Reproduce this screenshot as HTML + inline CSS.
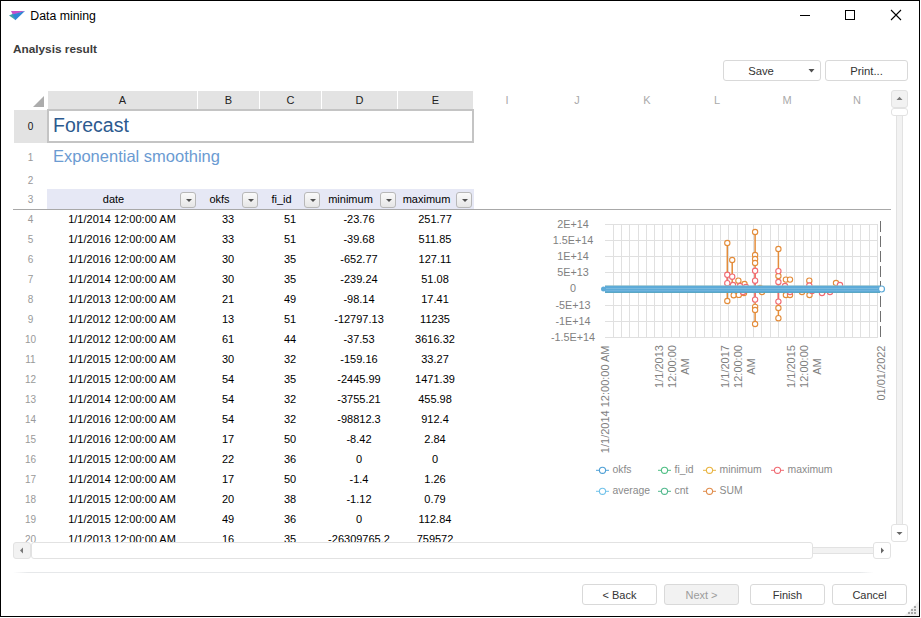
<!DOCTYPE html><html><head><meta charset="utf-8"><style>
html,body{margin:0;padding:0;background:#fff;}
body{width:921px;height:618px;position:relative;overflow:hidden;font-family:"Liberation Sans", sans-serif;}
.t,.b{position:absolute;box-sizing:border-box;white-space:nowrap;}
.btn{position:absolute;box-sizing:border-box;border:1px solid #d9d9d9;border-radius:3px;background:#fff;font-size:11px;color:#333;text-align:center;}
.fb{position:absolute;box-sizing:border-box;width:16px;height:16px;border:1px solid #b8b8b8;border-radius:3px;background:linear-gradient(#fafafa,#e6e6e6);}
.fb:after{content:"";position:absolute;left:4.5px;top:6px;border-left:3px solid transparent;border-right:3px solid transparent;border-top:3px solid #505050;}
</style></head><body>
<div class="b" style="left:0px;top:0px;width:920px;height:617px;border:1px solid #000;"></div>
<svg class="b" style="left:0;top:0" width="40" height="30" viewBox="0 0 40 30"><polygon points="11,11 25,11 13,15" fill="#c552c9"/><polygon points="9,15.5 13,13.8 15.5,20" fill="#3fa3a8"/><polygon points="12.5,14.5 25,11 15.3,20.3" fill="#2f86d4"/></svg>
<div class="t" style="left:30.3px;top:8px;width:100px;height:16px;line-height:16px;font-size:12.3px;color:#000;text-align:left;font-weight:normal;">Data mining</div>
<svg class="b" style="left:790px;top:0" width="120" height="30" viewBox="790 0 120 30"><rect x="800" y="15" width="10" height="1" fill="#000"/><rect x="845.5" y="10.5" width="9" height="9" fill="none" stroke="#000" stroke-width="1"/><path d="M891,10 L901,20 M901,10 L891,20" stroke="#000" stroke-width="1.1"/></svg>
<div class="t" style="left:13px;top:41px;width:120px;height:16px;line-height:16px;font-size:11.8px;color:#3c3c3c;text-align:left;font-weight:bold;">Analysis result</div>
<div class="btn" style="left:723px;top:60px;width:98px;height:21px;"></div>
<div class="t" style="left:723px;top:61px;width:76px;height:21px;line-height:21px;font-size:11.3px;color:#333;text-align:center;font-weight:normal;">Save</div>
<svg class="b" style="left:808px;top:68px" width="8" height="6"><polygon points="0.5,1 6.5,1 3.5,4.5" fill="#505050"/></svg>
<div class="btn" style="left:825px;top:60px;width:83px;height:21px;"></div>
<div class="t" style="left:825px;top:61px;width:83px;height:21px;line-height:21px;font-size:11.3px;color:#333;text-align:center;font-weight:normal;">Print...</div>
<svg class="b" style="left:30px;top:94px" width="16" height="16"><polygon points="3,13 14,13 14,2" fill="#acacac"/></svg>
<div class="b" style="left:48px;top:91px;width:425px;height:18px;background:#e3e3e3;"></div>
<div class="b" style="left:197px;top:91px;width:1px;height:18px;background:#fff;"></div>
<div class="b" style="left:259px;top:91px;width:1px;height:18px;background:#fff;"></div>
<div class="b" style="left:321px;top:91px;width:1px;height:18px;background:#fff;"></div>
<div class="b" style="left:397px;top:91px;width:1px;height:18px;background:#fff;"></div>
<div class="t" style="left:48px;top:91px;width:149px;height:18px;line-height:18px;font-size:11px;color:#222;text-align:center;font-weight:normal;">A</div>
<div class="t" style="left:198px;top:91px;width:61px;height:18px;line-height:18px;font-size:11px;color:#222;text-align:center;font-weight:normal;">B</div>
<div class="t" style="left:260px;top:91px;width:61px;height:18px;line-height:18px;font-size:11px;color:#222;text-align:center;font-weight:normal;">C</div>
<div class="t" style="left:322px;top:91px;width:75px;height:18px;line-height:18px;font-size:11px;color:#222;text-align:center;font-weight:normal;">D</div>
<div class="t" style="left:398px;top:91px;width:75px;height:18px;line-height:18px;font-size:11px;color:#222;text-align:center;font-weight:normal;">E</div>
<div class="t" style="left:472px;top:91px;width:70px;height:18px;line-height:18px;font-size:11px;color:#aaa;text-align:center;font-weight:normal;">I</div>
<div class="t" style="left:542px;top:91px;width:70px;height:18px;line-height:18px;font-size:11px;color:#aaa;text-align:center;font-weight:normal;">J</div>
<div class="t" style="left:612px;top:91px;width:70px;height:18px;line-height:18px;font-size:11px;color:#aaa;text-align:center;font-weight:normal;">K</div>
<div class="t" style="left:682px;top:91px;width:70px;height:18px;line-height:18px;font-size:11px;color:#aaa;text-align:center;font-weight:normal;">L</div>
<div class="t" style="left:752px;top:91px;width:70px;height:18px;line-height:18px;font-size:11px;color:#aaa;text-align:center;font-weight:normal;">M</div>
<div class="t" style="left:822px;top:91px;width:70px;height:18px;line-height:18px;font-size:11px;color:#aaa;text-align:center;font-weight:normal;">N</div>
<div class="b" style="left:14px;top:110px;width:33px;height:33px;background:#e3e3e3;"></div>
<div class="t" style="left:14px;top:110px;width:33px;height:33px;line-height:33px;font-size:10px;color:#111;text-align:center;font-weight:normal;">0</div>
<div class="t" style="left:14px;top:144px;width:33px;height:28px;line-height:28px;font-size:10px;color:#999;text-align:center;font-weight:normal;">1</div>
<div class="t" style="left:14px;top:171.5px;width:33px;height:18px;line-height:18px;font-size:10px;color:#999;text-align:center;font-weight:normal;">2</div>
<div class="t" style="left:14px;top:190px;width:33px;height:20px;line-height:20px;font-size:10px;color:#999;text-align:center;font-weight:normal;">3</div>
<div class="b" style="left:47px;top:109px;width:427px;height:34px;border:2px solid #c4c4c4;"></div>
<div class="t" style="left:53px;top:110px;width:300px;height:30px;line-height:30px;font-size:19.5px;color:#2c5a8f;text-align:left;font-weight:normal;">Forecast</div>
<div class="t" style="left:53px;top:143px;width:300px;height:26px;line-height:26px;font-size:16.5px;color:#6b9bd2;text-align:left;font-weight:normal;">Exponential smoothing</div>
<div class="b" style="left:47px;top:189px;width:427px;height:20px;background:#e6e8f5;"></div>
<div class="t" style="left:47px;top:189px;width:133px;height:20px;line-height:20px;font-size:11px;color:#000;text-align:center;font-weight:normal;">date</div>
<div class="fb" style="left:180px;top:192px;"></div>
<div class="t" style="left:197px;top:189px;width:45px;height:20px;line-height:20px;font-size:11px;color:#000;text-align:center;font-weight:normal;">okfs</div>
<div class="fb" style="left:242px;top:192px;"></div>
<div class="t" style="left:259px;top:189px;width:45px;height:20px;line-height:20px;font-size:11px;color:#000;text-align:center;font-weight:normal;">fi_id</div>
<div class="fb" style="left:304px;top:192px;"></div>
<div class="t" style="left:321px;top:189px;width:59px;height:20px;line-height:20px;font-size:11px;color:#000;text-align:center;font-weight:normal;">minimum</div>
<div class="fb" style="left:380px;top:192px;"></div>
<div class="t" style="left:397px;top:189px;width:59px;height:20px;line-height:20px;font-size:11px;color:#000;text-align:center;font-weight:normal;">maximum</div>
<div class="fb" style="left:456px;top:192px;"></div>
<div class="b" style="left:13px;top:209px;width:878px;height:1px;background:#a8a8a8;"></div>
<div class="b" style="left:0;top:210px;width:900px;height:332px;overflow:hidden;">
<div class="t" style="left:14px;top:0px;width:33px;height:20px;line-height:20px;font-size:10px;color:#999;text-align:center;font-weight:normal;">4</div>
<div class="t" style="left:47px;top:-1px;width:150px;height:20px;line-height:20px;font-size:11px;color:#000;text-align:center;font-weight:normal;">1/1/2014 12:00:00 AM</div>
<div class="t" style="left:197px;top:-1px;width:62px;height:20px;line-height:20px;font-size:11px;color:#000;text-align:center;font-weight:normal;">33</div>
<div class="t" style="left:259px;top:-1px;width:62px;height:20px;line-height:20px;font-size:11px;color:#000;text-align:center;font-weight:normal;">51</div>
<div class="t" style="left:321px;top:-1px;width:76px;height:20px;line-height:20px;font-size:11px;color:#000;text-align:center;font-weight:normal;">-23.76</div>
<div class="t" style="left:397px;top:-1px;width:76px;height:20px;line-height:20px;font-size:11px;color:#000;text-align:center;font-weight:normal;">251.77</div>
<div class="t" style="left:14px;top:20px;width:33px;height:20px;line-height:20px;font-size:10px;color:#999;text-align:center;font-weight:normal;">5</div>
<div class="t" style="left:47px;top:19px;width:150px;height:20px;line-height:20px;font-size:11px;color:#000;text-align:center;font-weight:normal;">1/1/2016 12:00:00 AM</div>
<div class="t" style="left:197px;top:19px;width:62px;height:20px;line-height:20px;font-size:11px;color:#000;text-align:center;font-weight:normal;">33</div>
<div class="t" style="left:259px;top:19px;width:62px;height:20px;line-height:20px;font-size:11px;color:#000;text-align:center;font-weight:normal;">51</div>
<div class="t" style="left:321px;top:19px;width:76px;height:20px;line-height:20px;font-size:11px;color:#000;text-align:center;font-weight:normal;">-39.68</div>
<div class="t" style="left:397px;top:19px;width:76px;height:20px;line-height:20px;font-size:11px;color:#000;text-align:center;font-weight:normal;">511.85</div>
<div class="t" style="left:14px;top:40px;width:33px;height:20px;line-height:20px;font-size:10px;color:#999;text-align:center;font-weight:normal;">6</div>
<div class="t" style="left:47px;top:39px;width:150px;height:20px;line-height:20px;font-size:11px;color:#000;text-align:center;font-weight:normal;">1/1/2016 12:00:00 AM</div>
<div class="t" style="left:197px;top:39px;width:62px;height:20px;line-height:20px;font-size:11px;color:#000;text-align:center;font-weight:normal;">30</div>
<div class="t" style="left:259px;top:39px;width:62px;height:20px;line-height:20px;font-size:11px;color:#000;text-align:center;font-weight:normal;">35</div>
<div class="t" style="left:321px;top:39px;width:76px;height:20px;line-height:20px;font-size:11px;color:#000;text-align:center;font-weight:normal;">-652.77</div>
<div class="t" style="left:397px;top:39px;width:76px;height:20px;line-height:20px;font-size:11px;color:#000;text-align:center;font-weight:normal;">127.11</div>
<div class="t" style="left:14px;top:60px;width:33px;height:20px;line-height:20px;font-size:10px;color:#999;text-align:center;font-weight:normal;">7</div>
<div class="t" style="left:47px;top:59px;width:150px;height:20px;line-height:20px;font-size:11px;color:#000;text-align:center;font-weight:normal;">1/1/2014 12:00:00 AM</div>
<div class="t" style="left:197px;top:59px;width:62px;height:20px;line-height:20px;font-size:11px;color:#000;text-align:center;font-weight:normal;">30</div>
<div class="t" style="left:259px;top:59px;width:62px;height:20px;line-height:20px;font-size:11px;color:#000;text-align:center;font-weight:normal;">35</div>
<div class="t" style="left:321px;top:59px;width:76px;height:20px;line-height:20px;font-size:11px;color:#000;text-align:center;font-weight:normal;">-239.24</div>
<div class="t" style="left:397px;top:59px;width:76px;height:20px;line-height:20px;font-size:11px;color:#000;text-align:center;font-weight:normal;">51.08</div>
<div class="t" style="left:14px;top:80px;width:33px;height:20px;line-height:20px;font-size:10px;color:#999;text-align:center;font-weight:normal;">8</div>
<div class="t" style="left:47px;top:79px;width:150px;height:20px;line-height:20px;font-size:11px;color:#000;text-align:center;font-weight:normal;">1/1/2013 12:00:00 AM</div>
<div class="t" style="left:197px;top:79px;width:62px;height:20px;line-height:20px;font-size:11px;color:#000;text-align:center;font-weight:normal;">21</div>
<div class="t" style="left:259px;top:79px;width:62px;height:20px;line-height:20px;font-size:11px;color:#000;text-align:center;font-weight:normal;">49</div>
<div class="t" style="left:321px;top:79px;width:76px;height:20px;line-height:20px;font-size:11px;color:#000;text-align:center;font-weight:normal;">-98.14</div>
<div class="t" style="left:397px;top:79px;width:76px;height:20px;line-height:20px;font-size:11px;color:#000;text-align:center;font-weight:normal;">17.41</div>
<div class="t" style="left:14px;top:100px;width:33px;height:20px;line-height:20px;font-size:10px;color:#999;text-align:center;font-weight:normal;">9</div>
<div class="t" style="left:47px;top:99px;width:150px;height:20px;line-height:20px;font-size:11px;color:#000;text-align:center;font-weight:normal;">1/1/2012 12:00:00 AM</div>
<div class="t" style="left:197px;top:99px;width:62px;height:20px;line-height:20px;font-size:11px;color:#000;text-align:center;font-weight:normal;">13</div>
<div class="t" style="left:259px;top:99px;width:62px;height:20px;line-height:20px;font-size:11px;color:#000;text-align:center;font-weight:normal;">51</div>
<div class="t" style="left:321px;top:99px;width:76px;height:20px;line-height:20px;font-size:11px;color:#000;text-align:center;font-weight:normal;">-12797.13</div>
<div class="t" style="left:397px;top:99px;width:76px;height:20px;line-height:20px;font-size:11px;color:#000;text-align:center;font-weight:normal;">11235</div>
<div class="t" style="left:14px;top:120px;width:33px;height:20px;line-height:20px;font-size:10px;color:#999;text-align:center;font-weight:normal;">10</div>
<div class="t" style="left:47px;top:119px;width:150px;height:20px;line-height:20px;font-size:11px;color:#000;text-align:center;font-weight:normal;">1/1/2012 12:00:00 AM</div>
<div class="t" style="left:197px;top:119px;width:62px;height:20px;line-height:20px;font-size:11px;color:#000;text-align:center;font-weight:normal;">61</div>
<div class="t" style="left:259px;top:119px;width:62px;height:20px;line-height:20px;font-size:11px;color:#000;text-align:center;font-weight:normal;">44</div>
<div class="t" style="left:321px;top:119px;width:76px;height:20px;line-height:20px;font-size:11px;color:#000;text-align:center;font-weight:normal;">-37.53</div>
<div class="t" style="left:397px;top:119px;width:76px;height:20px;line-height:20px;font-size:11px;color:#000;text-align:center;font-weight:normal;">3616.32</div>
<div class="t" style="left:14px;top:140px;width:33px;height:20px;line-height:20px;font-size:10px;color:#999;text-align:center;font-weight:normal;">11</div>
<div class="t" style="left:47px;top:139px;width:150px;height:20px;line-height:20px;font-size:11px;color:#000;text-align:center;font-weight:normal;">1/1/2015 12:00:00 AM</div>
<div class="t" style="left:197px;top:139px;width:62px;height:20px;line-height:20px;font-size:11px;color:#000;text-align:center;font-weight:normal;">30</div>
<div class="t" style="left:259px;top:139px;width:62px;height:20px;line-height:20px;font-size:11px;color:#000;text-align:center;font-weight:normal;">32</div>
<div class="t" style="left:321px;top:139px;width:76px;height:20px;line-height:20px;font-size:11px;color:#000;text-align:center;font-weight:normal;">-159.16</div>
<div class="t" style="left:397px;top:139px;width:76px;height:20px;line-height:20px;font-size:11px;color:#000;text-align:center;font-weight:normal;">33.27</div>
<div class="t" style="left:14px;top:160px;width:33px;height:20px;line-height:20px;font-size:10px;color:#999;text-align:center;font-weight:normal;">12</div>
<div class="t" style="left:47px;top:159px;width:150px;height:20px;line-height:20px;font-size:11px;color:#000;text-align:center;font-weight:normal;">1/1/2015 12:00:00 AM</div>
<div class="t" style="left:197px;top:159px;width:62px;height:20px;line-height:20px;font-size:11px;color:#000;text-align:center;font-weight:normal;">54</div>
<div class="t" style="left:259px;top:159px;width:62px;height:20px;line-height:20px;font-size:11px;color:#000;text-align:center;font-weight:normal;">35</div>
<div class="t" style="left:321px;top:159px;width:76px;height:20px;line-height:20px;font-size:11px;color:#000;text-align:center;font-weight:normal;">-2445.99</div>
<div class="t" style="left:397px;top:159px;width:76px;height:20px;line-height:20px;font-size:11px;color:#000;text-align:center;font-weight:normal;">1471.39</div>
<div class="t" style="left:14px;top:180px;width:33px;height:20px;line-height:20px;font-size:10px;color:#999;text-align:center;font-weight:normal;">13</div>
<div class="t" style="left:47px;top:179px;width:150px;height:20px;line-height:20px;font-size:11px;color:#000;text-align:center;font-weight:normal;">1/1/2014 12:00:00 AM</div>
<div class="t" style="left:197px;top:179px;width:62px;height:20px;line-height:20px;font-size:11px;color:#000;text-align:center;font-weight:normal;">54</div>
<div class="t" style="left:259px;top:179px;width:62px;height:20px;line-height:20px;font-size:11px;color:#000;text-align:center;font-weight:normal;">32</div>
<div class="t" style="left:321px;top:179px;width:76px;height:20px;line-height:20px;font-size:11px;color:#000;text-align:center;font-weight:normal;">-3755.21</div>
<div class="t" style="left:397px;top:179px;width:76px;height:20px;line-height:20px;font-size:11px;color:#000;text-align:center;font-weight:normal;">455.98</div>
<div class="t" style="left:14px;top:200px;width:33px;height:20px;line-height:20px;font-size:10px;color:#999;text-align:center;font-weight:normal;">14</div>
<div class="t" style="left:47px;top:199px;width:150px;height:20px;line-height:20px;font-size:11px;color:#000;text-align:center;font-weight:normal;">1/1/2016 12:00:00 AM</div>
<div class="t" style="left:197px;top:199px;width:62px;height:20px;line-height:20px;font-size:11px;color:#000;text-align:center;font-weight:normal;">54</div>
<div class="t" style="left:259px;top:199px;width:62px;height:20px;line-height:20px;font-size:11px;color:#000;text-align:center;font-weight:normal;">32</div>
<div class="t" style="left:321px;top:199px;width:76px;height:20px;line-height:20px;font-size:11px;color:#000;text-align:center;font-weight:normal;">-98812.3</div>
<div class="t" style="left:397px;top:199px;width:76px;height:20px;line-height:20px;font-size:11px;color:#000;text-align:center;font-weight:normal;">912.4</div>
<div class="t" style="left:14px;top:220px;width:33px;height:20px;line-height:20px;font-size:10px;color:#999;text-align:center;font-weight:normal;">15</div>
<div class="t" style="left:47px;top:219px;width:150px;height:20px;line-height:20px;font-size:11px;color:#000;text-align:center;font-weight:normal;">1/1/2016 12:00:00 AM</div>
<div class="t" style="left:197px;top:219px;width:62px;height:20px;line-height:20px;font-size:11px;color:#000;text-align:center;font-weight:normal;">17</div>
<div class="t" style="left:259px;top:219px;width:62px;height:20px;line-height:20px;font-size:11px;color:#000;text-align:center;font-weight:normal;">50</div>
<div class="t" style="left:321px;top:219px;width:76px;height:20px;line-height:20px;font-size:11px;color:#000;text-align:center;font-weight:normal;">-8.42</div>
<div class="t" style="left:397px;top:219px;width:76px;height:20px;line-height:20px;font-size:11px;color:#000;text-align:center;font-weight:normal;">2.84</div>
<div class="t" style="left:14px;top:240px;width:33px;height:20px;line-height:20px;font-size:10px;color:#999;text-align:center;font-weight:normal;">16</div>
<div class="t" style="left:47px;top:239px;width:150px;height:20px;line-height:20px;font-size:11px;color:#000;text-align:center;font-weight:normal;">1/1/2015 12:00:00 AM</div>
<div class="t" style="left:197px;top:239px;width:62px;height:20px;line-height:20px;font-size:11px;color:#000;text-align:center;font-weight:normal;">22</div>
<div class="t" style="left:259px;top:239px;width:62px;height:20px;line-height:20px;font-size:11px;color:#000;text-align:center;font-weight:normal;">36</div>
<div class="t" style="left:321px;top:239px;width:76px;height:20px;line-height:20px;font-size:11px;color:#000;text-align:center;font-weight:normal;">0</div>
<div class="t" style="left:397px;top:239px;width:76px;height:20px;line-height:20px;font-size:11px;color:#000;text-align:center;font-weight:normal;">0</div>
<div class="t" style="left:14px;top:260px;width:33px;height:20px;line-height:20px;font-size:10px;color:#999;text-align:center;font-weight:normal;">17</div>
<div class="t" style="left:47px;top:259px;width:150px;height:20px;line-height:20px;font-size:11px;color:#000;text-align:center;font-weight:normal;">1/1/2014 12:00:00 AM</div>
<div class="t" style="left:197px;top:259px;width:62px;height:20px;line-height:20px;font-size:11px;color:#000;text-align:center;font-weight:normal;">17</div>
<div class="t" style="left:259px;top:259px;width:62px;height:20px;line-height:20px;font-size:11px;color:#000;text-align:center;font-weight:normal;">50</div>
<div class="t" style="left:321px;top:259px;width:76px;height:20px;line-height:20px;font-size:11px;color:#000;text-align:center;font-weight:normal;">-1.4</div>
<div class="t" style="left:397px;top:259px;width:76px;height:20px;line-height:20px;font-size:11px;color:#000;text-align:center;font-weight:normal;">1.26</div>
<div class="t" style="left:14px;top:280px;width:33px;height:20px;line-height:20px;font-size:10px;color:#999;text-align:center;font-weight:normal;">18</div>
<div class="t" style="left:47px;top:279px;width:150px;height:20px;line-height:20px;font-size:11px;color:#000;text-align:center;font-weight:normal;">1/1/2015 12:00:00 AM</div>
<div class="t" style="left:197px;top:279px;width:62px;height:20px;line-height:20px;font-size:11px;color:#000;text-align:center;font-weight:normal;">20</div>
<div class="t" style="left:259px;top:279px;width:62px;height:20px;line-height:20px;font-size:11px;color:#000;text-align:center;font-weight:normal;">38</div>
<div class="t" style="left:321px;top:279px;width:76px;height:20px;line-height:20px;font-size:11px;color:#000;text-align:center;font-weight:normal;">-1.12</div>
<div class="t" style="left:397px;top:279px;width:76px;height:20px;line-height:20px;font-size:11px;color:#000;text-align:center;font-weight:normal;">0.79</div>
<div class="t" style="left:14px;top:300px;width:33px;height:20px;line-height:20px;font-size:10px;color:#999;text-align:center;font-weight:normal;">19</div>
<div class="t" style="left:47px;top:299px;width:150px;height:20px;line-height:20px;font-size:11px;color:#000;text-align:center;font-weight:normal;">1/1/2015 12:00:00 AM</div>
<div class="t" style="left:197px;top:299px;width:62px;height:20px;line-height:20px;font-size:11px;color:#000;text-align:center;font-weight:normal;">49</div>
<div class="t" style="left:259px;top:299px;width:62px;height:20px;line-height:20px;font-size:11px;color:#000;text-align:center;font-weight:normal;">36</div>
<div class="t" style="left:321px;top:299px;width:76px;height:20px;line-height:20px;font-size:11px;color:#000;text-align:center;font-weight:normal;">0</div>
<div class="t" style="left:397px;top:299px;width:76px;height:20px;line-height:20px;font-size:11px;color:#000;text-align:center;font-weight:normal;">112.84</div>
<div class="t" style="left:14px;top:320px;width:33px;height:20px;line-height:20px;font-size:10px;color:#999;text-align:center;font-weight:normal;">20</div>
<div class="t" style="left:47px;top:319px;width:150px;height:20px;line-height:20px;font-size:11px;color:#000;text-align:center;font-weight:normal;">1/1/2013 12:00:00 AM</div>
<div class="t" style="left:197px;top:319px;width:62px;height:20px;line-height:20px;font-size:11px;color:#000;text-align:center;font-weight:normal;">16</div>
<div class="t" style="left:259px;top:319px;width:62px;height:20px;line-height:20px;font-size:11px;color:#000;text-align:center;font-weight:normal;">35</div>
<div class="t" style="left:321px;top:319px;width:76px;height:20px;line-height:20px;font-size:11px;color:#000;text-align:center;font-weight:normal;">-26309765.2</div>
<div class="t" style="left:397px;top:319px;width:76px;height:20px;line-height:20px;font-size:11px;color:#000;text-align:center;font-weight:normal;">759572</div>
</div>
<svg class="b" style="left:0;top:0" width="921" height="618" viewBox="0 0 921 618"><line x1="613.5" y1="224" x2="613.5" y2="338" stroke="#e0e0e0" stroke-width="1"/><line x1="621.5" y1="224" x2="621.5" y2="338" stroke="#e0e0e0" stroke-width="1"/><line x1="629.5" y1="224" x2="629.5" y2="338" stroke="#e0e0e0" stroke-width="1"/><line x1="638.5" y1="224" x2="638.5" y2="338" stroke="#e0e0e0" stroke-width="1"/><line x1="646.5" y1="224" x2="646.5" y2="338" stroke="#e0e0e0" stroke-width="1"/><line x1="654.5" y1="224" x2="654.5" y2="338" stroke="#e0e0e0" stroke-width="1"/><line x1="662.5" y1="224" x2="662.5" y2="338" stroke="#e0e0e0" stroke-width="1"/><line x1="671.5" y1="224" x2="671.5" y2="338" stroke="#e0e0e0" stroke-width="1"/><line x1="679.5" y1="224" x2="679.5" y2="338" stroke="#e0e0e0" stroke-width="1"/><line x1="687.5" y1="224" x2="687.5" y2="338" stroke="#e0e0e0" stroke-width="1"/><line x1="695.5" y1="224" x2="695.5" y2="338" stroke="#e0e0e0" stroke-width="1"/><line x1="704.5" y1="224" x2="704.5" y2="338" stroke="#e0e0e0" stroke-width="1"/><line x1="712.5" y1="224" x2="712.5" y2="338" stroke="#e0e0e0" stroke-width="1"/><line x1="720.5" y1="224" x2="720.5" y2="338" stroke="#e0e0e0" stroke-width="1"/><line x1="728.5" y1="224" x2="728.5" y2="338" stroke="#e0e0e0" stroke-width="1"/><line x1="737.5" y1="224" x2="737.5" y2="338" stroke="#e0e0e0" stroke-width="1"/><line x1="745.5" y1="224" x2="745.5" y2="338" stroke="#e0e0e0" stroke-width="1"/><line x1="753.5" y1="224" x2="753.5" y2="338" stroke="#e0e0e0" stroke-width="1"/><line x1="761.5" y1="224" x2="761.5" y2="338" stroke="#e0e0e0" stroke-width="1"/><line x1="770.5" y1="224" x2="770.5" y2="338" stroke="#e0e0e0" stroke-width="1"/><line x1="778.5" y1="224" x2="778.5" y2="338" stroke="#e0e0e0" stroke-width="1"/><line x1="786.5" y1="224" x2="786.5" y2="338" stroke="#e0e0e0" stroke-width="1"/><line x1="794.5" y1="224" x2="794.5" y2="338" stroke="#e0e0e0" stroke-width="1"/><line x1="803.5" y1="224" x2="803.5" y2="338" stroke="#e0e0e0" stroke-width="1"/><line x1="811.5" y1="224" x2="811.5" y2="338" stroke="#e0e0e0" stroke-width="1"/><line x1="819.5" y1="224" x2="819.5" y2="338" stroke="#e0e0e0" stroke-width="1"/><line x1="827.5" y1="224" x2="827.5" y2="338" stroke="#e0e0e0" stroke-width="1"/><line x1="836.5" y1="224" x2="836.5" y2="338" stroke="#e0e0e0" stroke-width="1"/><line x1="844.5" y1="224" x2="844.5" y2="338" stroke="#e0e0e0" stroke-width="1"/><line x1="852.5" y1="224" x2="852.5" y2="338" stroke="#e0e0e0" stroke-width="1"/><line x1="860.5" y1="224" x2="860.5" y2="338" stroke="#e0e0e0" stroke-width="1"/><line x1="869.5" y1="224" x2="869.5" y2="338" stroke="#e0e0e0" stroke-width="1"/><line x1="877.5" y1="224" x2="877.5" y2="338" stroke="#e0e0e0" stroke-width="1"/><line x1="605" y1="224.5" x2="878" y2="224.5" stroke="#e0e0e0" stroke-width="1"/><line x1="605" y1="240.5" x2="878" y2="240.5" stroke="#e0e0e0" stroke-width="1"/><line x1="605" y1="256.5" x2="878" y2="256.5" stroke="#e0e0e0" stroke-width="1"/><line x1="605" y1="272.5" x2="878" y2="272.5" stroke="#e0e0e0" stroke-width="1"/><line x1="605" y1="288.5" x2="878" y2="288.5" stroke="#e0e0e0" stroke-width="1"/><line x1="605" y1="305.5" x2="878" y2="305.5" stroke="#e0e0e0" stroke-width="1"/><line x1="605" y1="321.5" x2="878" y2="321.5" stroke="#e0e0e0" stroke-width="1"/><line x1="605" y1="337.5" x2="878" y2="337.5" stroke="#e0e0e0" stroke-width="1"/><text x="573" y="228.4" text-anchor="middle" font-size="10.8" fill="#7f7f7f" font-family="Liberation Sans">2E+14</text><text x="573" y="244.4" text-anchor="middle" font-size="10.8" fill="#7f7f7f" font-family="Liberation Sans">1.5E+14</text><text x="573" y="260.4" text-anchor="middle" font-size="10.8" fill="#7f7f7f" font-family="Liberation Sans">1E+14</text><text x="573" y="276.4" text-anchor="middle" font-size="10.8" fill="#7f7f7f" font-family="Liberation Sans">5E+13</text><text x="573" y="292.4" text-anchor="middle" font-size="10.8" fill="#7f7f7f" font-family="Liberation Sans">0</text><text x="573" y="309.4" text-anchor="middle" font-size="10.8" fill="#7f7f7f" font-family="Liberation Sans">-5E+13</text><text x="573" y="325.4" text-anchor="middle" font-size="10.8" fill="#7f7f7f" font-family="Liberation Sans">-1E+14</text><text x="573" y="341.4" text-anchor="middle" font-size="10.8" fill="#7f7f7f" font-family="Liberation Sans">-1.5E+14</text><line x1="880.5" y1="221" x2="880.5" y2="338" stroke="#707070" stroke-width="1" stroke-dasharray="11 4"/><line x1="727.3" y1="243" x2="727.3" y2="301" stroke="#e38c3a" stroke-width="1.5"/><line x1="732.2" y1="260" x2="732.2" y2="289" stroke="#e38c3a" stroke-width="1.5"/><line x1="755.1" y1="232" x2="755.1" y2="324" stroke="#e38c3a" stroke-width="1.5"/><line x1="778.4" y1="249" x2="778.4" y2="318" stroke="#e38c3a" stroke-width="1.5"/><line x1="727.3" y1="275" x2="727.3" y2="283" stroke="#f06a72" stroke-width="1.5"/><line x1="755.1" y1="271" x2="755.1" y2="300" stroke="#f06a72" stroke-width="1.5"/><line x1="778.4" y1="271" x2="778.4" y2="302" stroke="#f06a72" stroke-width="1.5"/><circle cx="727.3" cy="243" r="2.65" fill="#fff" stroke="#e38c3a" stroke-width="1.1"/><circle cx="727.3" cy="301" r="2.65" fill="#fff" stroke="#e38c3a" stroke-width="1.1"/><circle cx="732.2" cy="260" r="2.65" fill="#fff" stroke="#e38c3a" stroke-width="1.1"/><circle cx="738.4" cy="280.7" r="2.65" fill="#fff" stroke="#e38c3a" stroke-width="1.1"/><circle cx="744.5" cy="284" r="2.65" fill="#fff" stroke="#e38c3a" stroke-width="1.1"/><circle cx="733.7" cy="295.2" r="2.65" fill="#fff" stroke="#e38c3a" stroke-width="1.1"/><circle cx="738.8" cy="294.9" r="2.65" fill="#fff" stroke="#e38c3a" stroke-width="1.1"/><circle cx="744" cy="293" r="2.65" fill="#fff" stroke="#e38c3a" stroke-width="1.1"/><circle cx="755.1" cy="232" r="2.65" fill="#fff" stroke="#e38c3a" stroke-width="1.1"/><circle cx="755.1" cy="255" r="2.65" fill="#fff" stroke="#e38c3a" stroke-width="1.1"/><circle cx="755.1" cy="259" r="2.65" fill="#fff" stroke="#e38c3a" stroke-width="1.1"/><circle cx="755.1" cy="263" r="2.65" fill="#fff" stroke="#e38c3a" stroke-width="1.1"/><circle cx="755.1" cy="306.9" r="2.65" fill="#fff" stroke="#e38c3a" stroke-width="1.1"/><circle cx="755.1" cy="310" r="2.65" fill="#fff" stroke="#e38c3a" stroke-width="1.1"/><circle cx="755.1" cy="324" r="2.65" fill="#fff" stroke="#e38c3a" stroke-width="1.1"/><circle cx="760" cy="288" r="2.65" fill="#fff" stroke="#e38c3a" stroke-width="1.1"/><circle cx="778.4" cy="249" r="2.65" fill="#fff" stroke="#e38c3a" stroke-width="1.1"/><circle cx="778.4" cy="276" r="2.65" fill="#fff" stroke="#e38c3a" stroke-width="1.1"/><circle cx="778.4" cy="308" r="2.65" fill="#fff" stroke="#e38c3a" stroke-width="1.1"/><circle cx="778.4" cy="318.2" r="2.65" fill="#fff" stroke="#e38c3a" stroke-width="1.1"/><circle cx="785.9" cy="279.6" r="2.65" fill="#fff" stroke="#e38c3a" stroke-width="1.1"/><circle cx="790" cy="279.6" r="2.65" fill="#fff" stroke="#e38c3a" stroke-width="1.1"/><circle cx="785.9" cy="295" r="2.65" fill="#fff" stroke="#e38c3a" stroke-width="1.1"/><circle cx="790" cy="295" r="2.65" fill="#fff" stroke="#e38c3a" stroke-width="1.1"/><circle cx="809.3" cy="280.7" r="2.65" fill="#fff" stroke="#e38c3a" stroke-width="1.1"/><circle cx="809.5" cy="295" r="2.65" fill="#fff" stroke="#e38c3a" stroke-width="1.1"/><circle cx="836" cy="283" r="2.65" fill="#fff" stroke="#e38c3a" stroke-width="1.1"/><circle cx="823" cy="291" r="2.65" fill="#fff" stroke="#e38c3a" stroke-width="1.1"/><circle cx="802" cy="292" r="2.65" fill="#fff" stroke="#e38c3a" stroke-width="1.1"/><circle cx="762" cy="292" r="2.65" fill="#fff" stroke="#e38c3a" stroke-width="1.1"/><circle cx="727.3" cy="274.8" r="2.65" fill="#fff" stroke="#f06a72" stroke-width="1.1"/><circle cx="727.3" cy="283.2" r="2.65" fill="#fff" stroke="#f06a72" stroke-width="1.1"/><circle cx="732.2" cy="276.7" r="2.65" fill="#fff" stroke="#f06a72" stroke-width="1.1"/><circle cx="733" cy="285" r="2.65" fill="#fff" stroke="#f06a72" stroke-width="1.1"/><circle cx="740" cy="286" r="2.65" fill="#fff" stroke="#f06a72" stroke-width="1.1"/><circle cx="746" cy="287" r="2.65" fill="#fff" stroke="#f06a72" stroke-width="1.1"/><circle cx="743" cy="292" r="2.65" fill="#fff" stroke="#f06a72" stroke-width="1.1"/><circle cx="755.1" cy="270.8" r="2.65" fill="#fff" stroke="#f06a72" stroke-width="1.1"/><circle cx="755.1" cy="280.7" r="2.65" fill="#fff" stroke="#f06a72" stroke-width="1.1"/><circle cx="755.1" cy="299.6" r="2.65" fill="#fff" stroke="#f06a72" stroke-width="1.1"/><circle cx="778.4" cy="271.1" r="2.65" fill="#fff" stroke="#f06a72" stroke-width="1.1"/><circle cx="778.4" cy="282" r="2.65" fill="#fff" stroke="#f06a72" stroke-width="1.1"/><circle cx="778.4" cy="301.6" r="2.65" fill="#fff" stroke="#f06a72" stroke-width="1.1"/><circle cx="840" cy="285" r="2.65" fill="#fff" stroke="#f06a72" stroke-width="1.1"/><circle cx="822" cy="293" r="2.65" fill="#fff" stroke="#f06a72" stroke-width="1.1"/><circle cx="830" cy="292" r="2.65" fill="#fff" stroke="#f06a72" stroke-width="1.1"/><circle cx="812" cy="291" r="2.65" fill="#fff" stroke="#f06a72" stroke-width="1.1"/><circle cx="785" cy="286" r="2.65" fill="#fff" stroke="#f06a72" stroke-width="1.1"/><circle cx="790" cy="292" r="2.65" fill="#fff" stroke="#f06a72" stroke-width="1.1"/><circle cx="809.3" cy="285.5" r="2.65" fill="#fff" stroke="#f06a72" stroke-width="1.1"/><rect x="605" y="285" width="275" height="1" fill="#d5dcb5" fill-opacity="0.5"/><rect x="605" y="285.6" width="275" height="7.2" fill="#5eabd8"/><rect x="605" y="288" width="275" height="1" fill="#86c0e2" fill-opacity="0.7"/><rect x="605" y="290" width="275" height="1" fill="#80bce0" fill-opacity="0.5"/><rect x="605" y="292" width="275" height="1" fill="#52a2bc" fill-opacity="0.8"/><circle cx="603.5" cy="289" r="2.5" fill="#5eabd8"/><circle cx="881.5" cy="289" r="3" fill="#fff" stroke="#5eabd8" stroke-width="1.2"/><text transform="translate(608.9,345.5) rotate(-90)" text-anchor="end" font-size="11" fill="#7f7f7f" font-family="Liberation Sans" x="0" y="0">1/1/2014 12:00:00 AM</text><text transform="translate(662.5,345.5) rotate(-90)" text-anchor="middle" font-size="11" fill="#7f7f7f" font-family="Liberation Sans" x="-21" y="0">1/1/2013</text><text transform="translate(675.5,345.5) rotate(-90)" text-anchor="middle" font-size="11" fill="#7f7f7f" font-family="Liberation Sans" x="-21" y="0">12:00:00</text><text transform="translate(688.5,345.5) rotate(-90)" text-anchor="middle" font-size="11" fill="#7f7f7f" font-family="Liberation Sans" x="-21" y="0">AM</text><text transform="translate(728.8,345.5) rotate(-90)" text-anchor="middle" font-size="11" fill="#7f7f7f" font-family="Liberation Sans" x="-21" y="0">1/1/2017</text><text transform="translate(741.8,345.5) rotate(-90)" text-anchor="middle" font-size="11" fill="#7f7f7f" font-family="Liberation Sans" x="-21" y="0">12:00:00</text><text transform="translate(754.8,345.5) rotate(-90)" text-anchor="middle" font-size="11" fill="#7f7f7f" font-family="Liberation Sans" x="-21" y="0">AM</text><text transform="translate(794.8,345.5) rotate(-90)" text-anchor="middle" font-size="11" fill="#7f7f7f" font-family="Liberation Sans" x="-21" y="0">1/1/2015</text><text transform="translate(807.8,345.5) rotate(-90)" text-anchor="middle" font-size="11" fill="#7f7f7f" font-family="Liberation Sans" x="-21" y="0">12:00:00</text><text transform="translate(820.8,345.5) rotate(-90)" text-anchor="middle" font-size="11" fill="#7f7f7f" font-family="Liberation Sans" x="-21" y="0">AM</text><text transform="translate(884.9,345.5) rotate(-90)" text-anchor="end" font-size="11" fill="#7f7f7f" font-family="Liberation Sans" x="0" y="0">01/01/2022</text><line x1="596" y1="470.3" x2="609" y2="470.3" stroke="#4fa0d6" stroke-width="1"/><circle cx="602.5" cy="470.3" r="3.1" fill="#fff" stroke="#4fa0d6" stroke-width="1.1"/><text x="612.5" y="472.7" font-size="10.4" fill="#8a8a8a" font-family="Liberation Sans">okfs</text><line x1="658" y1="470.3" x2="671" y2="470.3" stroke="#4fbf84" stroke-width="1"/><circle cx="664.5" cy="470.3" r="3.1" fill="#fff" stroke="#4fbf84" stroke-width="1.1"/><text x="674.5" y="472.7" font-size="10.4" fill="#8a8a8a" font-family="Liberation Sans">fi_id</text><line x1="703" y1="470.3" x2="716" y2="470.3" stroke="#e9b441" stroke-width="1"/><circle cx="709.5" cy="470.3" r="3.1" fill="#fff" stroke="#e9b441" stroke-width="1.1"/><text x="719.5" y="472.7" font-size="10.4" fill="#8a8a8a" font-family="Liberation Sans">minimum</text><line x1="771" y1="470.3" x2="784" y2="470.3" stroke="#f06a72" stroke-width="1"/><circle cx="777.5" cy="470.3" r="3.1" fill="#fff" stroke="#f06a72" stroke-width="1.1"/><text x="787.5" y="472.7" font-size="10.4" fill="#8a8a8a" font-family="Liberation Sans">maximum</text><line x1="596" y1="491.3" x2="609" y2="491.3" stroke="#71c2ea" stroke-width="1"/><circle cx="602.5" cy="491.3" r="3.1" fill="#fff" stroke="#71c2ea" stroke-width="1.1"/><text x="612.5" y="493.7" font-size="10.4" fill="#8a8a8a" font-family="Liberation Sans">average</text><line x1="658" y1="491.3" x2="671" y2="491.3" stroke="#52b98e" stroke-width="1"/><circle cx="664.5" cy="491.3" r="3.1" fill="#fff" stroke="#52b98e" stroke-width="1.1"/><text x="674.5" y="493.7" font-size="10.4" fill="#8a8a8a" font-family="Liberation Sans">cnt</text><line x1="703" y1="491.3" x2="716" y2="491.3" stroke="#e08d4c" stroke-width="1"/><circle cx="709.5" cy="491.3" r="3.1" fill="#fff" stroke="#e08d4c" stroke-width="1.1"/><text x="719.5" y="493.7" font-size="10.4" fill="#8a8a8a" font-family="Liberation Sans">SUM</text></svg>
<div class="b" style="left:891px;top:90px;width:17px;height:18px;background:#f2f2f2;border:1px solid #e2e2e2;border-radius:3px;"></div>
<svg class="b" style="left:891px;top:90px" width="17" height="18"><polygon points="5.5,10 11.5,10 8.5,6.8" fill="#7a7a7a"/></svg>
<div class="b" style="left:891px;top:108px;width:17px;height:8px;background:#fff;border:1px solid #e2e2e2;border-radius:3px;"></div>
<div class="b" style="left:896px;top:116px;width:7px;height:408px;background:#f2f2f2;border-left:1px solid #e2e2e2;border-right:1px solid #e2e2e2;"></div>
<div class="b" style="left:891px;top:524px;width:17px;height:18px;background:#fff;border:1px solid #e2e2e2;border-radius:3px;"></div>
<svg class="b" style="left:891px;top:524px" width="17" height="18"><polygon points="5.5,8 11.5,8 8.5,11" fill="#666"/></svg>
<div class="b" style="left:13px;top:542px;width:18px;height:17px;background:#f2f2f2;border:1px solid #e2e2e2;border-radius:3px;"></div>
<svg class="b" style="left:13px;top:542px" width="18" height="17"><polygon points="10,5.5 10,11.5 7,8.5" fill="#777"/></svg>
<div class="b" style="left:31px;top:542px;width:782px;height:17px;background:#fff;border:1px solid #e2e2e2;border-radius:3px;"></div>
<div class="b" style="left:813px;top:547px;width:60px;height:7px;background:#f2f2f2;border-top:1px solid #e2e2e2;border-bottom:1px solid #e2e2e2;"></div>
<div class="b" style="left:873px;top:542px;width:18px;height:17px;background:#fff;border:1px solid #e2e2e2;border-radius:3px;"></div>
<svg class="b" style="left:873px;top:542px" width="18" height="17"><polygon points="8,5.5 8,11.5 11,8.5" fill="#666"/></svg>
<div class="b" style="left:13px;top:572px;width:861px;height:1px;background:linear-gradient(to right, rgba(230,232,234,0), #e6e8ea 15px, #e6e8ea 847px, rgba(230,232,234,0));"></div>
<div class="btn" style="left:582px;top:584px;width:75px;height:21px;line-height:21px;">&lt; Back</div>
<div class="btn" style="left:664px;top:584px;width:75px;height:21px;line-height:21px;background:#f2f2f2;color:#9c9c9c;">Next &gt;</div>
<div class="btn" style="left:750px;top:584px;width:75px;height:21px;line-height:21px;">Finish</div>
<div class="btn" style="left:832px;top:584px;width:75px;height:21px;line-height:21px;">Cancel</div>
<svg class="b" style="left:900px;top:598px" width="20" height="19" viewBox="900 598 20 19"><polygon points="904,616 919,601 919,616" fill="#efefef"/><rect x="914" y="606" width="2" height="2" fill="#a8a8a8"/><rect x="911" y="609" width="2" height="2" fill="#a8a8a8"/><rect x="914" y="609" width="2" height="2" fill="#a8a8a8"/><rect x="908" y="612" width="2" height="2" fill="#a8a8a8"/><rect x="911" y="612" width="2" height="2" fill="#a8a8a8"/><rect x="914" y="612" width="2" height="2" fill="#a8a8a8"/></svg>
</body></html>
